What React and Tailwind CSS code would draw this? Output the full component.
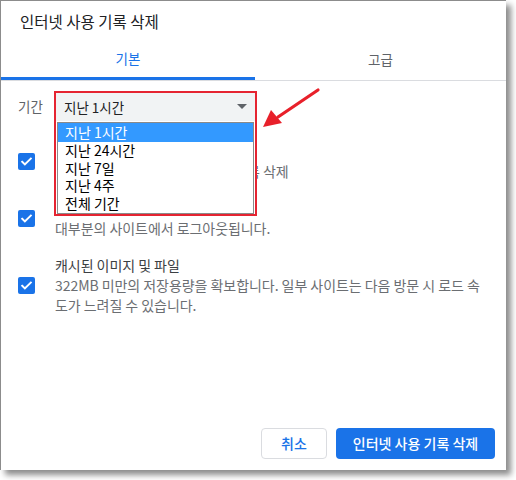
import React from 'react';

const font = { fontFamily: '"Noto Sans CJK KR", "Noto Sans", sans-serif' };

function Check() {
  return (
    <div className="w-[17px] h-[17px] shrink-0 rounded-[2px] bg-[#1a73e8] flex items-center justify-center">
      <svg width="13" height="13" viewBox="0 0 24 24" fill="none" stroke="white" strokeWidth="3.6" strokeLinecap="square">
        <path d="M4 12.5l5 5L20 6.5" />
      </svg>
    </div>
  );
}

function Option({ title, lines }) {
  return (
    <div className="flex items-center">
      <Check />
      <div className="ml-[20px] text-[14px] leading-[20px] tracking-[-0.05px]">
        <div className="text-[#3c4043]">{title}</div>
        {lines.map((l) => (
          <div key={l} className="text-[#6b6e72]">{l}</div>
        ))}
      </div>
    </div>
  );
}

const ranges = ['지난 1시간', '지난 24시간', '지난 7일', '지난 4주', '전체 기간'];

export default function App() {
  return (
    <div className="w-[516px] h-[480px] bg-white" style={font}>
      <div className="relative w-[506px] h-[470px] bg-white border-l border-t border-[#8c8c8c] shadow-[5px_5px_6px_rgba(0,0,0,0.45)] flex flex-col">
        <div className="h-[38px] pl-[19px] pt-[9px] text-[15.5px] text-[#202124]">인터넷 사용 기록 삭제</div>

        <div className="flex h-[42px] border-b border-[#dadce0]">
          <div className="w-[254px] flex items-center justify-center text-[13.5px] text-[#1a73e8] border-b-[3px] border-[#1a73e8]">기본</div>
          <div className="flex-1 flex items-center justify-center text-[13.5px] text-[#5f6368]">고급</div>
        </div>

        <div className="mt-[10px] pl-[17px] flex items-center h-[30px]">
          <span className="text-[13.5px] text-[#5f6368] w-[36px]">기간</span>
          <div className="relative w-[203px] h-[30px]">
            <div className="absolute top-0 left-0 w-[203px] h-[125px] border-2 border-[#e52431] z-10 bg-white flex flex-col">
              <div className="h-[28px] bg-[#f1f3f4] flex items-center justify-between pl-[8px] pr-[8px] text-[13.5px] text-[#202124]">
                <span>지난 1시간</span>
                <svg width="10" height="6" viewBox="0 0 10 6"><path d="M0 0h10L5 5z" fill="#5f6368" /></svg>
              </div>
              <div className="mt-[1px] mx-[1px] flex-1 border border-[#8a8a8a] flex flex-col text-[14px] leading-[17px] text-black">
                {ranges.map((r, i) => (
                  <div key={r} className={i === 0 ? 'h-[19px] pl-[7px] flex items-center bg-[#3399ff] text-white' : 'h-[17.5px] pl-[7px] flex items-center'}>
                    {r}
                  </div>
                ))}
              </div>
            </div>
          </div>
        </div>

        <div className="mt-[20px] pl-[17px] flex flex-col gap-[17px]">
          <Option title="인터넷 사용 기록" lines={['로그인된 모든 기기에서 방문한 기록 삭제']} />
          <Option title="쿠키 및 기타 사이트 데이터" lines={['대부분의 사이트에서 로그아웃됩니다.']} />
          <Option
            title="캐시된 이미지 및 파일"
            lines={['322MB 미만의 저장용량을 확보합니다. 일부 사이트는 다음 방문 시 로드 속', '도가 느려질 수 있습니다.']}
          />
        </div>

        <div className="mt-auto mb-[11px] mr-[11px] flex justify-end gap-[9px]">
          <button className="w-[66px] h-[31px] rounded-[4px] border border-[#dadce0] bg-white text-[14px] font-medium text-[#1a73e8]">취소</button>
          <button className="w-[159px] h-[31px] rounded-[4px] bg-[#1a73e8] text-[14px] font-medium text-white">인터넷 사용 기록 삭제</button>
        </div>

        <svg className="absolute left-[255px] top-[82px] z-20" width="70" height="50" viewBox="0 0 70 50">
          <path d="M62 7L22 34" stroke="#e8202a" strokeWidth="3.2" strokeLinecap="round" />
          <path d="M7 44L15 27L26 40z" fill="#e8202a" />
        </svg>
      </div>
    </div>
  );
}
